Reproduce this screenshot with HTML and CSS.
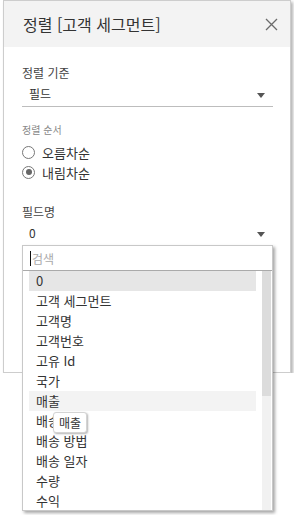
FILE: index.html
```html
<!DOCTYPE html>
<html lang="ko">
<head>
    <meta charset="UTF-8">
    <meta name="viewport" content="width=device-width, initial-scale=1.0">
    <title>정렬</title>
    <link rel="stylesheet" href="styles.css">
</head>
<body>
    <div class="dialogo">
        <div class="cabecera">
            <span class="titulo">정렬 [고객 세그먼트]</span>
            <svg class="cerrar" width="13" height="13" viewBox="0 0 13 13">
                <path d="M1 1 L12 12 M12 1 L1 12" stroke="#6b6b6b" stroke-width="1.3" fill="none"/>
            </svg>
        </div>
        <div class="cuerpo">
            <div class="etiqueta">정렬 기준</div>
            <div class="selector con-linea">
                <span>필드</span>
                <span class="flecha"></span>
            </div>

            <div class="etiqueta-chica">정렬 순서</div>
            <div class="opcion"><span class="radio"></span>오름차순</div>
            <div class="opcion"><span class="radio activo"></span>내림차순</div>

            <div class="etiqueta campo">필드명</div>
            <div class="selector">
                <span>0</span>
                <span class="flecha"></span>
            </div>
        </div>
    </div>

    <div class="menu">
        <div class="buscar"><span class="cursor"></span>검색</div>
        <div class="lista">
            <div class="items">
                <div class="item elegido">0</div>
                <div class="item">고객 세그먼트</div>
                <div class="item">고객명</div>
                <div class="item">고객번호</div>
                <div class="item">고유 Id</div>
                <div class="item">국가</div>
                <div class="item encima">매출</div>
                <div class="item">배송 상태</div>
                <div class="item">배송 방법</div>
                <div class="item">배송 일자</div>
                <div class="item">수량</div>
                <div class="item">수익</div>
            </div>
            <div class="barra"><div class="pulgar"></div></div>
        </div>
    </div>

    <div class="globo">매출</div>
</body>
</html>
```

FILE: styles.css
```css
body {
    margin: 0;
    padding: 0;
    background: white;
    font-family: "Noto Sans CJK KR", "Noto Sans", sans-serif;
    color: #333;
}
.dialogo {
    margin-left: 3px;
    width: 286px;
    height: 371px;
    border: 1px solid #cdcdcd;
    background: white;
    box-shadow: 2px 2px 3px rgba(0, 0, 0, 0.3);
}
.cabecera {
    height: 46px;
    background: #f3f3f3;
    display: flex;
    align-items: center;
    justify-content: space-between;
    padding: 0 12px 0 19px;
}
.titulo {
    font-size: 16px;
    line-height: 20px;
    color: #333;
}
.cerrar {
    display: block;
}
.cuerpo {
    padding: 18px 17px 0 18px;
}
.etiqueta {
    font-size: 12px;
    line-height: 16px;
    color: #444;
}
.campo {
    margin-top: 22px;
}
.selector {
    display: flex;
    justify-content: space-between;
    align-items: center;
    height: 20px;
    margin-top: 2px;
    padding: 0 8px 0 7px;
    font-size: 12px;
}
.con-linea {
    padding-bottom: 3px;
    border-bottom: 1px solid #bdbdbd;
}
.flecha {
    width: 0;
    height: 0;
    border-left: 4px solid transparent;
    border-right: 4px solid transparent;
    border-top: 5px solid #555;
    margin-top: 4px;
}
.etiqueta-chica {
    margin-top: 16px;
    font-size: 10px;
    line-height: 14px;
    color: #888;
}
.opcion {
    display: flex;
    align-items: center;
    height: 20px;
    font-size: 13px;
    color: #333;
}
.etiqueta-chica + .opcion {
    margin-top: 5px;
}
.radio {
    width: 11px;
    height: 11px;
    border: 1px solid #777;
    border-radius: 50%;
    margin-right: 7px;
    display: flex;
    align-items: center;
    justify-content: center;
}
.radio.activo::after {
    content: "";
    width: 6px;
    height: 6px;
    border-radius: 50%;
    background: #666;
}
.menu {
    position: absolute;
    left: 22px;
    top: 245px;
    width: 249px;
    height: 264px;
    border: 1px solid #c8c8c8;
    background: white;
    box-shadow: 2px 2px 3px rgba(0, 0, 0, 0.35);
    display: flex;
    flex-direction: column;
}
.buscar {
    height: 24px;
    border-bottom: 1px solid #aaa;
    display: flex;
    align-items: center;
    padding-left: 7px;
    font-size: 12px;
    color: #aaa;
}
.cursor {
    width: 1px;
    height: 15px;
    background: #111;
    margin-right: 1px;
}
.lista {
    flex: 1;
    display: flex;
    overflow: hidden;
    padding-left: 6px;
}
.items {
    width: 227px;
}
.item {
    height: 20px;
    line-height: 20px;
    padding-left: 7px;
    font-size: 13px;
    color: #333;
    white-space: nowrap;
}
.elegido {
    background: #e6e6e6;
}
.encima {
    background: #f3f3f3;
}
.barra {
    margin-left: 6px;
    width: 9px;
    background: #f1f1f1;
}
.pulgar {
    height: 125px;
    background: #dcdcdc;
}
.globo {
    position: absolute;
    left: 53px;
    top: 412px;
    padding: 0 5px;
    height: 19px;
    line-height: 19px;
    font-size: 12px;
    color: #333;
    background: white;
    border: 1px solid #d4d4d4;
    border-radius: 3px;
    box-shadow: 1px 1px 2px rgba(0, 0, 0, 0.3);
}
```
